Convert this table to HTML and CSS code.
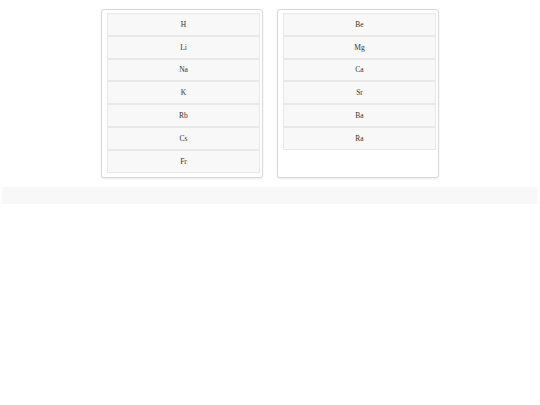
FILE: index.html
```html
<!DOCTYPE html>
<html>
<head>
<meta charset="utf-8">
<link rel="stylesheet" href="styles.css">
</head>
<body>
<div class="lists">
  <div class="card">
    <div class="item">H</div>
    <div class="item">Li</div>
    <div class="item">Na</div>
    <div class="item">K</div>
    <div class="item">Rb</div>
    <div class="item">Cs</div>
    <div class="item">Fr</div>
  </div>
  <div class="card">
    <div class="item">Be</div>
    <div class="item">Mg</div>
    <div class="item">Ca</div>
    <div class="item">Sr</div>
    <div class="item">Ba</div>
    <div class="item">Ra</div>
  </div>
</div>
<div class="bar"></div>
</body>
</html>
```
FILE: styles.css
```css
html, body {
  margin: 0;
  padding: 0;
  background: #fff;
}
body {
  font-family: "Liberation Serif", serif;
  font-size: 7.5px;
  color: #333;
}
.lists {
  display: flex;
  justify-content: center;
  gap: 14px;
  padding-top: 9px;
}
.card {
  box-sizing: border-box;
  width: 162px;
  height: 169px;
  padding: 3px 2px 3px 5px;
  border: 1px solid #d8d8d8;
  border-radius: 3px;
  box-shadow: 0 1px 2px rgba(0,0,0,0.08);
  background: #fff;
}
.item {
  box-sizing: border-box;
  height: 22.8px;
  border: 1px solid #e8e8e8;
  background: #f8f8f8;
  display: flex;
  align-items: center;
  justify-content: center;
}
.bar {
  margin: 9px 3px 0 3px;
  height: 17px;
  background: #f8f8f8;
  border-radius: 2px;
  box-shadow: 0 1px 2px rgba(0,0,0,0.1);
}
```
